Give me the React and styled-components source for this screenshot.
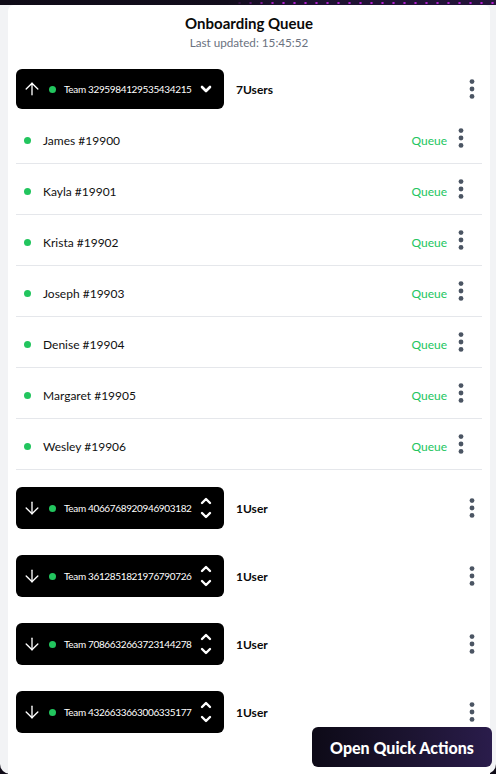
import React from "react";
import styled, { createGlobalStyle } from "styled-components";

const Global = createGlobalStyle`
  html, body { margin: 0; padding: 0; }
  body {
    background: #0f0b17;
    font-family: Lato, "Noto Sans", "Liberation Sans", sans-serif;
    -webkit-font-smoothing: antialiased;
  }
  * { box-sizing: border-box; }
`;

const Page = styled.div`
  height: 774px;
  display: flex;
  flex-direction: column;
  overflow: hidden;
`;

const TopStrip = styled.div`
  height: 5px;
  flex: none;
  background:
    linear-gradient(90deg, #0f0b17 0%, #120d1c 46%, rgba(18, 13, 28, 0) 56%),
    radial-gradient(circle, #b21fd0 0.9px, rgba(0, 0, 0, 0) 1.4px) 3px 1px / 11px 4px,
    linear-gradient(90deg, #140f20, #24143a);
`;

const Shell = styled.div`
  flex: 1;
  min-height: 0;
  background: #f2f3f5;
  border-radius: 0 0 10px 10px;
  padding: 0 6px 0 8px;
  display: flex;
`;

const Card = styled.div`
  flex: 1;
  background: #ffffff;
  border-radius: 6px 6px 0 0;
  padding: 9px 8px 0 8px;
  overflow: hidden;
`;

const Header = styled.header`
  display: flex;
  flex-direction: column;
  align-items: center;
`;

const Title = styled.h1`
  margin: 0;
  font-size: 15px;
  line-height: 18px;
  font-weight: 700;
  color: #0a0a0a;
`;

const Subtitle = styled.div`
  margin-top: 2px;
  font-size: 11.7px;
  line-height: 16px;
  color: #6b7280;
`;

const List = styled.div`
  margin-top: 6px;
  display: flex;
  flex-direction: column;
`;

const Section = styled.section`
  padding: 13px 0 ${(p) => (p.$open ? "4px" : "13px")};
`;

const TeamRow = styled.div`
  display: flex;
  align-items: center;
`;

const Pill = styled.button`
  all: unset;
  box-sizing: border-box;
  width: 208px;
  height: ${(p) => (p.$open ? "40px" : "42px")};
  background: #000;
  border-radius: 6px;
  display: flex;
  align-items: center;
  padding: 0 12px 0 6px;
  color: #fff;
  cursor: pointer;
`;

const Dot = styled.span`
  width: 7px;
  height: 7px;
  border-radius: 50%;
  background: #22c55e;
  flex: none;
  margin-left: ${(p) => p.$gap || 0}px;
`;

const TeamName = styled.span`
  margin-left: 8px;
  font-size: 10px;
  letter-spacing: -0.35px;
  line-height: 12px;
  white-space: nowrap;
  flex: 1;
`;

const Count = styled.span`
  margin-left: 12px;
  font-size: 12px;
  font-weight: 700;
  color: #0a0a0a;
  flex: 1;
`;

const KebabBtn = styled.button`
  all: unset;
  width: 20px;
  height: 24px;
  display: flex;
  align-items: center;
  justify-content: center;
  cursor: pointer;
  flex: none;
`;

const UserRow = styled.div`
  height: 51px;
  padding: 5px 11px 0 8px;
  border-bottom: 1px solid #e5e7eb;
  display: flex;
  align-items: center;
  &:first-child { margin-top: 4px; }
`;

const UserName = styled.span`
  margin-left: 12px;
  font-size: 12px;
  color: #111111;
  flex: 1;
`;

const QueueTag = styled.span`
  font-size: 12px;
  color: #22c55e;
  margin-right: 4px;
  margin-top: -1px;
`;

const KebabLow = styled(KebabBtn)`
  margin-top: -5px;
`;

const QuickActions = styled.button`
  all: unset;
  position: fixed;
  right: 4px;
  bottom: 7px;
  width: 180px;
  height: 40px;
  box-sizing: border-box;
  border-radius: 6px;
  background: linear-gradient(90deg, #0d0a17 0%, #1c1431 55%, #2a1c4b 100%);
  color: #fff;
  font-size: 16px;
  font-weight: 900;
  display: flex;
  align-items: center;
  justify-content: center;
  cursor: pointer;
`;

const Kebab = () => (
  <svg width="6" height="20" viewBox="0 0 6 20">
    <circle cx="3" cy="2.6" r="2.4" fill="#4b5563" />
    <circle cx="3" cy="10" r="2.4" fill="#4b5563" />
    <circle cx="3" cy="17.4" r="2.4" fill="#4b5563" />
  </svg>
);

const ArrowIcon = ({ up }) => (
  <svg width="20" height="20" viewBox="0 0 24 24" fill="none" stroke="#fff" strokeWidth="1.6" strokeLinecap="round" strokeLinejoin="round" style={{ flex: "none" }}>
    {up ? (
      <>
        <path d="M12 19V5" />
        <path d="m5 12 7-7 7 7" />
      </>
    ) : (
      <>
        <path d="M12 5v14" />
        <path d="m19 12-7 7-7-7" />
      </>
    )}
  </svg>
);

const ChevronDown = () => (
  <svg width="12" height="8" viewBox="0 0 12 8" fill="none" stroke="#fff" strokeWidth="2.6" strokeLinecap="round" strokeLinejoin="round" style={{ flex: "none", marginLeft: 6 }}>
    <path d="M2 2l4 4 4-4" />
  </svg>
);

const ChevronsUpDown = () => (
  <svg width="12" height="22" viewBox="0 0 12 22" fill="none" stroke="#fff" strokeWidth="2.4" strokeLinecap="round" strokeLinejoin="round" style={{ flex: "none", marginLeft: 6 }}>
    <path d="M2 6l4-4 4 4" />
    <path d="M2 16l4 4 4-4" />
  </svg>
);

const users = ["James", "Kayla", "Krista", "Joseph", "Denise", "Margaret", "Wesley"];

const teams = [
  { id: "3295984129535434215", open: true, count: "7Users" },
  { id: "4066768920946903182", open: false, count: "1User" },
  { id: "3612851821976790726", open: false, count: "1User" },
  { id: "7086632663723144278", open: false, count: "1User" },
  { id: "4326633663006335177", open: false, count: "1User" },
];

export default function App() {
  return (
    <>
      <Global />
      <Page>
        <TopStrip />
        <Shell>
          <Card>
            <Header>
              <Title>Onboarding Queue</Title>
              <Subtitle>Last updated: 15:45:52</Subtitle>
            </Header>
            <List>
              {teams.map((t) => (
                <Section key={t.id} $open={t.open}>
                  <TeamRow>
                    <Pill $open={t.open}>
                      <ArrowIcon up={t.open} />
                      <Dot $gap={7} />
                      <TeamName>Team {t.id}</TeamName>
                      {t.open ? <ChevronDown /> : <ChevronsUpDown />}
                    </Pill>
                    <Count>{t.count}</Count>
                    <KebabBtn aria-label="More">
                      <Kebab />
                    </KebabBtn>
                  </TeamRow>
                  {t.open && (
                    <div>
                      {users.map((u, i) => (
                        <UserRow key={u}>
                          <Dot />
                          <UserName>
                            {u} #{19900 + i}
                          </UserName>
                          <QueueTag>Queue</QueueTag>
                          <KebabLow aria-label="More">
                            <Kebab />
                          </KebabLow>
                        </UserRow>
                      ))}
                    </div>
                  )}
                </Section>
              ))}
            </List>
          </Card>
        </Shell>
        <QuickActions>Open Quick Actions</QuickActions>
      </Page>
    </>
  );
}
